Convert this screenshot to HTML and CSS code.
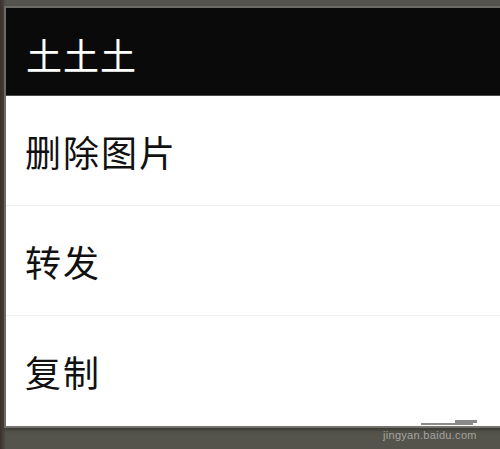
FILE: index.html
```html
<!DOCTYPE html>
<html lang="zh-CN">
<head>
    <meta charset="UTF-8">
    <meta name="viewport" content="width=device-width, initial-scale=1.0">
    <title>土土土</title>
    <link rel="stylesheet" href="styles.css">
</head>
<body>

<div class="screen">
    <div class="dialog">
        <div class="dialog-title">土土土</div>
        <div class="menu">
            <div class="menu-item">删除图片</div>
            <div class="menu-item">转发</div>
            <div class="menu-item">复制</div>
        </div>
    </div>

    <div class="watermark">
        <div class="watermark-logo">
            <span class="bar bar-long"></span>
            <span class="bar bar-short"></span>
        </div>
        <div class="watermark-text">jingyan.baidu.com</div>
    </div>
</div>

</body>
</html>
```

FILE: styles.css
```css
html, body {
    margin: 0;
    padding: 0;
}
body {
    width: 500px;
    height: 449px;
    overflow: hidden;
    background-color: #55544c;
    font-family: "Noto Sans CJK SC", "Noto Sans", sans-serif;
}
.screen {
    position: relative;
    width: 500px;
    height: 449px;
    padding: 6px 0 0 4px;
    box-sizing: border-box;
    background: linear-gradient(to right, #3a2e2a 0px, #4a4640 4px, #55544c 6px);
}
.dialog {
    width: 510px;
    border-top: 2px solid #6c6b66;
    border-left: 2px solid #6c6b66;
    border-bottom: 2px solid #75746e;
    box-shadow: 0 2px 3px rgba(0, 0, 0, 0.35);
}
.dialog-title {
    height: 88px;
    padding: 5px 0 0 20px;
    box-sizing: border-box;
    display: flex;
    align-items: center;
    background-color: #0a0a0a;
    border-bottom: 1px solid #4a4a4a;
    color: #ffffff;
    font-size: 36px;
    letter-spacing: 1px;
}
.menu {
    background-color: #ffffff;
}
.menu-item {
    height: 109px;
    padding-left: 19px;
    display: flex;
    align-items: center;
    border-bottom: 1px solid #efefef;
    color: #111111;
    font-size: 36px;
    letter-spacing: 2px;
}
.menu-item:last-child {
    height: 110px;
    border-bottom: none;
}
.watermark {
    position: absolute;
    left: 383px;
    top: 419px;
}
.watermark-logo {
    position: relative;
    height: 10px;
}
.bar {
    position: absolute;
    height: 2px;
    background-color: #8a8a88;
}
.bar-long {
    left: 38px;
    top: 4px;
    width: 52px;
}
.bar-short {
    left: 72px;
    top: 1px;
    width: 22px;
    height: 3px;
}
.watermark-text {
    font-family: "Liberation Sans", sans-serif;
    font-size: 11px;
    line-height: 12px;
    letter-spacing: 0.3px;
    color: rgba(200, 200, 196, 0.7);
}
```
